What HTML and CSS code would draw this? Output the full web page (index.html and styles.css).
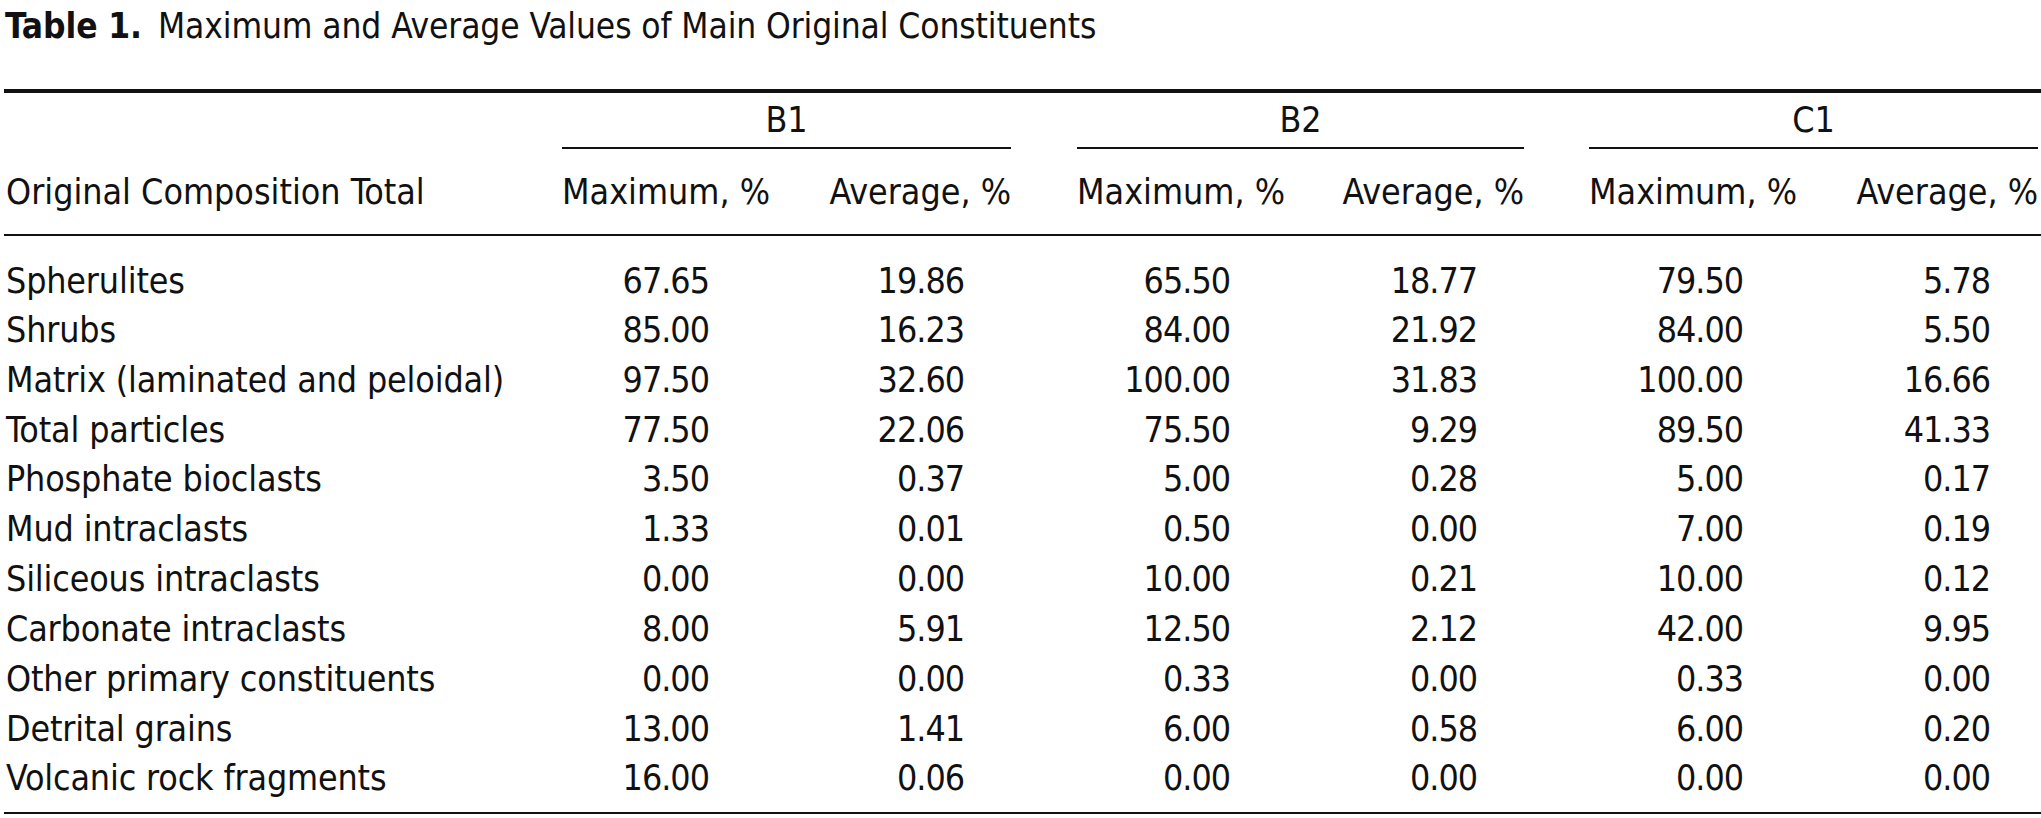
FILE: index.html
```html
<!DOCTYPE html>
<html lang="en">
<head>
<meta charset="utf-8">
<title>Table 1</title>
<link rel="stylesheet" href="styles.css">
</head>
<body>
<div class="page">
  <div class="caption"><span class="label">Table 1.</span>Maximum and Average Values of Main Original Constituents</div>
  <table class="data">
    <colgroup>
      <col class="c0"><col class="c1"><col class="c2"><col class="c3"><col class="c4"><col class="c5"><col class="c6">
    </colgroup>
    <thead>
      <tr class="groups">
        <th></th>
        <th colspan="2" class="g g1"><span class="gl">B1</span></th>
        <th colspan="2" class="g g2"><span class="gl">B2</span></th>
        <th colspan="2" class="g g3"><span class="gl">C1</span></th>
      </tr>
      <tr class="subs">
        <th class="lab">Original Composition Total</th>
        <th class="mx m1">Maximum, %</th>
        <th class="av a1">Average, %</th>
        <th class="mx m2">Maximum, %</th>
        <th class="av a2">Average, %</th>
        <th class="mx m3">Maximum, %</th>
        <th class="av a3">Average, %</th>
      </tr>
    </thead>
    <tbody>
      <tr><td class="lab">Spherulites</td><td class="n n1">67.65</td><td class="n n2">19.86</td><td class="n n3">65.50</td><td class="n n4">18.77</td><td class="n n5">79.50</td><td class="n n6">5.78</td></tr>
      <tr><td class="lab">Shrubs</td><td class="n n1">85.00</td><td class="n n2">16.23</td><td class="n n3">84.00</td><td class="n n4">21.92</td><td class="n n5">84.00</td><td class="n n6">5.50</td></tr>
      <tr><td class="lab">Matrix (laminated and peloidal)</td><td class="n n1">97.50</td><td class="n n2">32.60</td><td class="n n3">100.00</td><td class="n n4">31.83</td><td class="n n5">100.00</td><td class="n n6">16.66</td></tr>
      <tr><td class="lab">Total particles</td><td class="n n1">77.50</td><td class="n n2">22.06</td><td class="n n3">75.50</td><td class="n n4">9.29</td><td class="n n5">89.50</td><td class="n n6">41.33</td></tr>
      <tr><td class="lab">Phosphate bioclasts</td><td class="n n1">3.50</td><td class="n n2">0.37</td><td class="n n3">5.00</td><td class="n n4">0.28</td><td class="n n5">5.00</td><td class="n n6">0.17</td></tr>
      <tr><td class="lab">Mud intraclasts</td><td class="n n1">1.33</td><td class="n n2">0.01</td><td class="n n3">0.50</td><td class="n n4">0.00</td><td class="n n5">7.00</td><td class="n n6">0.19</td></tr>
      <tr><td class="lab">Siliceous intraclasts</td><td class="n n1">0.00</td><td class="n n2">0.00</td><td class="n n3">10.00</td><td class="n n4">0.21</td><td class="n n5">10.00</td><td class="n n6">0.12</td></tr>
      <tr><td class="lab">Carbonate intraclasts</td><td class="n n1">8.00</td><td class="n n2">5.91</td><td class="n n3">12.50</td><td class="n n4">2.12</td><td class="n n5">42.00</td><td class="n n6">9.95</td></tr>
      <tr><td class="lab">Other primary constituents</td><td class="n n1">0.00</td><td class="n n2">0.00</td><td class="n n3">0.33</td><td class="n n4">0.00</td><td class="n n5">0.33</td><td class="n n6">0.00</td></tr>
      <tr><td class="lab">Detrital grains</td><td class="n n1">13.00</td><td class="n n2">1.41</td><td class="n n3">6.00</td><td class="n n4">0.58</td><td class="n n5">6.00</td><td class="n n6">0.20</td></tr>
      <tr><td class="lab">Volcanic rock fragments</td><td class="n n1">16.00</td><td class="n n2">0.06</td><td class="n n3">0.00</td><td class="n n4">0.00</td><td class="n n5">0.00</td><td class="n n6">0.00</td></tr>
    </tbody>
  </table>
</div>
</body>
</html>
```

FILE: styles.css
```css
html, body {
  margin: 0;
  padding: 0;
  background: #ffffff;
}

.page {
  padding: 0 0 0 4px;
  font-family: "DejaVu Sans Condensed", "DejaVu Sans", "Liberation Sans", sans-serif;
  font-stretch: condensed;
  color: #111111;
  font-size: 35.5px;
}

.caption {
  height: 89px;
  box-sizing: border-box;
  padding: 6px 0 0 1px;
  font-size: 35px;
  line-height: 40px;
  letter-spacing: -0.1px;
}

.caption .label {
  font-weight: bold;
  margin-right: 16px;
}

.data {
  width: 2037px;
  table-layout: fixed;
  border-collapse: collapse;
  border-spacing: 0;
  border-top: 4px solid #111111;
  border-bottom: 2px solid #111111;
}

.c0 { width: 558px; }
.c1 { width: 228px; }
.c2 { width: 221px; }
.c3 { width: 289px; }
.c4 { width: 224px; }
.c5 { width: 288px; }
.c6 { width: 229px; }

th, td {
  padding: 0;
  font-weight: normal;
  white-space: nowrap;
  letter-spacing: 0;
}

.groups th {
  height: 56px;
  vertical-align: bottom;
}

.g .gl {
  display: block;
  text-align: center;
  line-height: 40px;
  padding-bottom: 7px;
  border-bottom: 2px solid #111111;
}

.g2 { padding-left: 66px; }
.g3 { padding-left: 65px; padding-right: 3px; }

.subs th {
  height: 85px;
  line-height: 40px;
  border-bottom: 2px solid #111111;
}

.lab {
  text-align: left;
  padding-left: 2px;
}

.mx { text-align: left; }
.m2 { padding-left: 66px; }
.m3 { padding-left: 65px; }

.av { text-align: right; }
.a3 { padding-right: 3px; }

tbody td {
  height: 49.85px;
  line-height: 40px;
  padding: 0;
}

tbody td.lab {
  padding-left: 2px;
  letter-spacing: -0.15px;
}

.n { text-align: right; letter-spacing: -1px; }
.n1 { padding-right: 81px; }
.n2 { padding-right: 47px; }
.n3 { padding-right: 70px; }
.n4 { padding-right: 47px; }
.n5 { padding-right: 69px; }
.n6 { padding-right: 51px; }

tbody tr:first-child td {
  height: 70px;
  padding-top: 21px;
  box-sizing: border-box;
}

tbody tr:last-child td {
  height: 59px;
  padding-bottom: 9px;
  box-sizing: border-box;
}
```
